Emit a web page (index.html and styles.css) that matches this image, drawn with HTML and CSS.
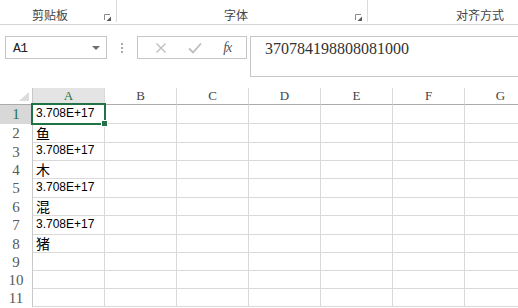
FILE: index.html
```html
<!DOCTYPE html>
<html lang="zh-CN">
<head>
    <meta charset="UTF-8">
    <title>工作表</title>
    <link rel="stylesheet" href="styles.css">
</head>
<body>
    <div class="ribbon">
        <div class="group group-clip">
            <span class="group-label">剪贴板</span>
            <svg class="launcher" width="7" height="7" viewBox="0 0 7 7"><path d="M0.5 6V0.5H6" fill="none" stroke="#8a8a8a"/><path d="M7 2.5V7H2.5Z" fill="#5a5a5a"/></svg>
        </div>
        <div class="group group-font">
            <span class="group-label">字体</span>
            <svg class="launcher" width="7" height="7" viewBox="0 0 7 7"><path d="M0.5 6V0.5H6" fill="none" stroke="#8a8a8a"/><path d="M7 2.5V7H2.5Z" fill="#5a5a5a"/></svg>
        </div>
        <div class="group group-align">
            <span class="group-label">对齐方式</span>
        </div>
    </div>

    <div class="formula-bar">
        <div class="name-box">
            <span class="name-text">A1</span>
            <svg class="name-arrow" width="8" height="4" viewBox="0 0 8 4"><path d="M0 0H8L4 4Z" fill="#6f6f6f"/></svg>
        </div>
        <div class="grip"><span></span><span></span><span></span></div>
        <div class="fx-buttons">
            <svg width="12" height="12" viewBox="0 0 12 12"><path d="M1.5 1.5L10.5 10.5M10.5 1.5L1.5 10.5" stroke="#bdbdbd" stroke-width="1.4"/></svg>
            <svg width="14" height="12" viewBox="0 0 14 12"><path d="M1 6.5L5 10.5L13 1.5" fill="none" stroke="#bdbdbd" stroke-width="1.8"/></svg>
            <span class="fx">fx</span>
        </div>
        <div class="formula-input">370784198808081000</div>
    </div>

    <div class="sheet-view">
        <div class="sheet">
            <div class="corner"><svg width="10" height="9" viewBox="0 0 10 9"><path d="M10 0V9H0Z" fill="#dcdcdc"/></svg></div>
            <div class="col-head active">A</div>
            <div class="col-head">B</div>
            <div class="col-head">C</div>
            <div class="col-head">D</div>
            <div class="col-head">E</div>
            <div class="col-head">F</div>
            <div class="col-head">G</div>

            <div class="row-head active">1</div>
            <div class="cell num selected">3.708E+17<span class="handle"></span></div>
            <div class="cell"></div><div class="cell"></div><div class="cell"></div><div class="cell"></div><div class="cell"></div><div class="cell"></div>

            <div class="row-head">2</div>
            <div class="cell cjk">鱼</div>
            <div class="cell"></div><div class="cell"></div><div class="cell"></div><div class="cell"></div><div class="cell"></div><div class="cell"></div>

            <div class="row-head">3</div>
            <div class="cell num">3.708E+17</div>
            <div class="cell"></div><div class="cell"></div><div class="cell"></div><div class="cell"></div><div class="cell"></div><div class="cell"></div>

            <div class="row-head">4</div>
            <div class="cell cjk">木</div>
            <div class="cell"></div><div class="cell"></div><div class="cell"></div><div class="cell"></div><div class="cell"></div><div class="cell"></div>

            <div class="row-head">5</div>
            <div class="cell num">3.708E+17</div>
            <div class="cell"></div><div class="cell"></div><div class="cell"></div><div class="cell"></div><div class="cell"></div><div class="cell"></div>

            <div class="row-head">6</div>
            <div class="cell cjk">混</div>
            <div class="cell"></div><div class="cell"></div><div class="cell"></div><div class="cell"></div><div class="cell"></div><div class="cell"></div>

            <div class="row-head">7</div>
            <div class="cell num">3.708E+17</div>
            <div class="cell"></div><div class="cell"></div><div class="cell"></div><div class="cell"></div><div class="cell"></div><div class="cell"></div>

            <div class="row-head">8</div>
            <div class="cell cjk">猪</div>
            <div class="cell"></div><div class="cell"></div><div class="cell"></div><div class="cell"></div><div class="cell"></div><div class="cell"></div>

            <div class="row-head">9</div>
            <div class="cell"></div><div class="cell"></div><div class="cell"></div><div class="cell"></div><div class="cell"></div><div class="cell"></div><div class="cell"></div>

            <div class="row-head">10</div>
            <div class="cell"></div><div class="cell"></div><div class="cell"></div><div class="cell"></div><div class="cell"></div><div class="cell"></div><div class="cell"></div>

            <div class="row-head">11</div>
            <div class="cell"></div><div class="cell"></div><div class="cell"></div><div class="cell"></div><div class="cell"></div><div class="cell"></div><div class="cell"></div>
        </div>
    </div>
</body>
</html>
```

FILE: styles.css
```css
body {
    margin: 0;
    width: 518px;
    height: 308px;
    overflow: hidden;
    background-color: #fff;
    font-family: 'Noto Sans CJK SC', sans-serif;
    color: #333;
}
.ribbon {
    display: flex;
    align-items: flex-start;
    height: 25px;
    border-bottom: 1px solid #d5d5d5;
    box-sizing: border-box;
    overflow: hidden;
}
.group {
    display: flex;
    align-items: center;
    height: 22px;
    padding-top: 8px;
    box-sizing: border-box;
    border-right: 1px solid #dadada;
    flex-shrink: 0;
}
.group-clip {
    width: 117px;
}
.group-font {
    width: 251px;
}
.group-align {
    width: 150px;
    border-right: none;
}
.group-label {
    flex: 1;
    text-align: center;
    font-size: 12px;
    line-height: 14px;
    color: #444;
}
.group-clip .group-label {
    padding-right: 4px;
}
.group-align .group-label {
    text-align: right;
    padding-right: 14px;
}
.launcher {
    align-self: flex-end;
    margin: 0 5px 1px 0;
}
.formula-bar {
    display: flex;
    align-items: flex-start;
    padding: 11px 0 0 5px;
    height: 52px;
    box-sizing: border-box;
}
.name-box {
    display: flex;
    align-items: center;
    width: 102px;
    height: 23px;
    border: 1px solid #c6c6c6;
    box-sizing: border-box;
    padding: 2px 6px 0 7px;
}
.name-text {
    flex: 1;
    font-family: 'Liberation Mono', monospace;
    font-size: 13px;
    letter-spacing: -0.5px;
    color: #222;
}
.name-arrow {
    margin-bottom: 2px;
}
.grip {
    display: flex;
    flex-direction: column;
    align-items: center;
    gap: 2px;
    width: 30px;
    padding-top: 7px;
}
.grip span {
    width: 2px;
    height: 2px;
    background-color: #aaa;
}
.fx-buttons {
    display: flex;
    align-items: center;
    justify-content: space-around;
    width: 110px;
    height: 23px;
    border: 1px solid #c6c6c6;
    box-sizing: border-box;
    padding: 0 4px 0 6px;
}
.fx {
    font-family: 'Liberation Serif', serif;
    font-style: italic;
    font-size: 14px;
    color: #555;
    letter-spacing: -1px;
}
.formula-input {
    flex: 1;
    height: 41px;
    margin-left: 3px;
    border: 1px solid #c6c6c6;
    border-right: none;
    box-sizing: border-box;
    padding: 3px 0 0 14px;
    font-family: 'Liberation Serif', serif;
    font-size: 16px;
    line-height: 18px;
    color: #333;
}
.sheet-view {
    margin-top: 11px;
    width: 518px;
    overflow: hidden;
}
.sheet {
    display: grid;
    grid-template-columns: 33px repeat(7, 72px);
    grid-template-rows: 17px 19px 19px 18px 18px 19px 18px 19px 18px 18px 18px 18px;
    width: 537px;
}
.corner {
    display: flex;
    align-items: flex-end;
    justify-content: flex-end;
    padding: 0 3px 3px 0;
    border-right: 1px solid #c8c8c8;
    border-bottom: 1px solid #ababab;
    box-sizing: border-box;
}
.col-head {
    display: flex;
    align-items: center;
    justify-content: center;
    font-family: 'Liberation Serif', serif;
    font-size: 13px;
    color: #444;
    border-right: 1px solid #dadada;
    border-bottom: 1px solid #ababab;
    box-sizing: border-box;
}
.col-head.active {
    background-color: #e4e4e4;
    color: #217346;
}
.row-head {
    display: flex;
    align-items: center;
    justify-content: center;
    font-family: 'Liberation Serif', serif;
    font-size: 15px;
    color: #595959;
    border-right: 1px solid #c8c8c8;
    box-sizing: border-box;
}
.row-head.active {
    background-color: #d8d8d8;
    color: #217346;
}
.cell {
    position: relative;
    display: flex;
    align-items: flex-end;
    padding: 0 0 2px 3px;
    border-right: 1px solid #d9d9d9;
    border-bottom: 1px solid #d9d9d9;
    box-sizing: border-box;
    color: #000;
    white-space: nowrap;
}
.cell.num {
    font-family: 'Liberation Sans', sans-serif;
    font-size: 12px;
    padding-bottom: 3px;
}
.cell.cjk {
    font-family: 'Noto Sans CJK SC', sans-serif;
    font-size: 14px;
    line-height: 16px;
    padding-bottom: 1px;
}
.cell.selected::after {
    content: '';
    position: absolute;
    left: -2px;
    top: -2px;
    right: -2px;
    bottom: -2px;
    border: 2px solid #217346;
}
.handle {
    position: absolute;
    right: -4px;
    bottom: -4px;
    width: 5px;
    height: 5px;
    background-color: #217346;
    border: 1px solid #fff;
    z-index: 1;
}
```
